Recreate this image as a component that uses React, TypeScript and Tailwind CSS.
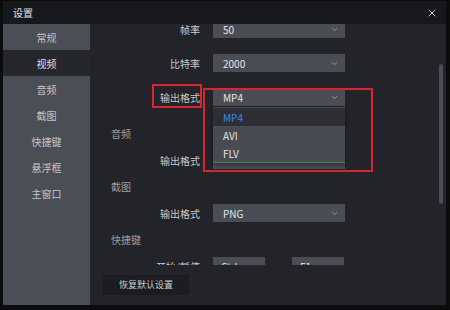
import React from "react";
import { ChevronDown, X } from "lucide-react";

const side = ["常规", "视频", "音频", "截图", "快捷键", "悬浮框", "主窗口"];

function Select({ value, w = "w-[132px]" }: { value: string; w?: string }) {
  return (
    <div className={`${w} h-[18px] bg-[#4a4d54] flex items-center justify-between pl-[10px] pr-[6px] text-[10px] text-[#e4e5e7]`}>
      <span>{value}</span>
      <ChevronDown size={9} strokeWidth={2} className="text-[#a8abb0]" />
    </div>
  );
}

function Row({ label, children }: { label: string; children: React.ReactNode }) {
  return (
    <div className="h-[34px] flex items-center">
      <div className="w-[110px] text-right text-[10px] text-[#c9cacd]">{label}</div>
      <div className="ml-[13px] flex items-center">{children}</div>
    </div>
  );
}

function Header({ label }: { label: string }) {
  return (
    <div className="h-[19px] flex items-center pl-[21px] text-[10px] text-[#9c9ea3]">{label}</div>
  );
}

export default function App() {
  return (
    <div className="relative w-[450px] h-[310px] bg-[#0b0c0e] pl-[3px] pt-[1px] font-['Noto_Sans_CJK_SC','Noto_Sans',sans-serif]">
      <div className="w-[443px] h-[304px] flex flex-col bg-[#222429]">
        <div className="h-[23px] bg-[#16181c] flex items-center justify-between pl-[10px] pr-[8px]">
          <span className="text-[10px] text-[#e2e3e5]">设置</span>
          <X size={12} strokeWidth={2} className="text-[#c4c6ca]" />
        </div>
        <div className="flex flex-1 min-h-0">
          <div className="w-[87px] bg-[#4a4e55] flex flex-col">
            {side.map((s, i) => (
              <div
                key={s}
                className={`h-[26px] flex items-center justify-center text-[10px] ${
                  i === 1 ? "bg-[#25272c] text-[#dcdde0]" : "text-[#c3c5c9]"
                }`}
              >
                {s}
              </div>
            ))}
          </div>
          <div className="flex-1 flex flex-col min-w-0">
            <div className="flex-1 overflow-hidden relative">
              <div className="-mt-[12px]">
                <Row label="帧率"><Select value="50" /></Row>
                <Row label="比特率"><Select value="2000" /></Row>
                <Row label="输出格式"><Select value="MP4" /></Row>
                <div className="h-[10px]" />
                <Header label="音频" />
                <Row label="输出格式"><Select value="" /></Row>
                <Header label="截图" />
                <Row label="输出格式"><Select value="PNG" /></Row>
                <Header label="快捷键" />
                <Row label="开始/暂停">
                  <div className="w-[52px] h-[18px] bg-[#4a4d54] flex items-center pl-[8px] text-[10px] text-[#e4e5e7]">Ctrl</div>
                  <div className="w-[27px] text-center text-[10px] text-[#c9cacd]">+</div>
                  <div className="w-[52px] h-[18px] bg-[#4a4d54] flex items-center pl-[8px] text-[10px] text-[#e4e5e7]">F1</div>
                </Row>
              </div>
              <div className="absolute right-[3px] top-[40px] w-[4px] h-[140px] rounded-full bg-[#4b4e55]" />
            </div>
            <div className="h-[40px] flex items-center pl-[13px]">
              <div className="w-[86px] h-[20px] bg-[#1a1c20] flex items-center justify-center text-[9px] text-[#c9cacd]">
                恢复默认设置
              </div>
            </div>
          </div>
        </div>
      </div>

      {/* dropdown */}
      <div className="absolute left-[213px] top-[107px] w-[132px] h-[56px] bg-[#484b52] pt-[1px] border-b border-[#5d7a5a] shadow-[0_2px_4px_rgba(0,0,0,0.4)] text-[10px]">
        <div className="h-[18px] bg-[#2d2f34] flex items-center pl-[10px] text-[#2d8cf0]">MP4</div>
        <div className="h-[18px] flex items-center pl-[10px] text-[#e4e5e7]">AVI</div>
        <div className="h-[18px] flex items-center pl-[10px] text-[#e4e5e7]">FLV</div>
      </div>

      {/* red highlight boxes */}
      <div className="absolute left-[152px] top-[84px] w-[50px] h-[24px] border-2 border-[#d9262e]" />
      <div className="absolute left-[203px] top-[88px] w-[170px] h-[84px] border-2 border-[#d9262e]" />
    </div>
  );
}
